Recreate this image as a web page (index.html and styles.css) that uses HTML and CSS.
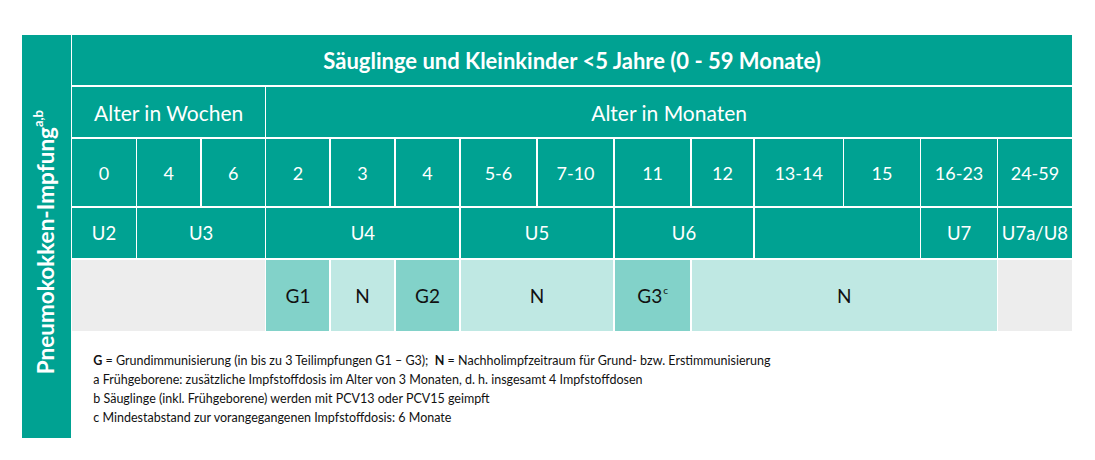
FILE: index.html
```html
<!DOCTYPE html>
<html lang="de">
<head>
<meta charset="utf-8">
<title>Pneumokokken-Impfung</title>
<link rel="stylesheet" href="styles.css">
</head>
<body>
<div class="page">
  <div class="side">
    <span class="side-label">Pneumokokken-Impfung<sup>a,b</sup></span>
  </div>
  <div class="main">
    <div class="table">
      <div class="cell title span-all">Säuglinge und Kleinkinder &lt;5 Jahre (0 - 59 Monate)</div>

      <div class="cell group c1-3">Alter in Wochen</div>
      <div class="cell group c4-14">Alter in Monaten</div>

      <div class="cell num">0</div>
      <div class="cell num">4</div>
      <div class="cell num">6</div>
      <div class="cell num">2</div>
      <div class="cell num">3</div>
      <div class="cell num">4</div>
      <div class="cell num">5-6</div>
      <div class="cell num">7-10</div>
      <div class="cell num">11</div>
      <div class="cell num">12</div>
      <div class="cell num">13-14</div>
      <div class="cell num">15</div>
      <div class="cell num">16-23</div>
      <div class="cell num">24-59</div>

      <div class="cell u">U2</div>
      <div class="cell u c2-3">U3</div>
      <div class="cell u c4-6">U4</div>
      <div class="cell u c7-8">U5</div>
      <div class="cell u c9-10">U6</div>
      <div class="cell u c11-12"></div>
      <div class="cell u">U7</div>
      <div class="cell u">U7a/U8</div>

      <div class="cell none c1-3"></div>
      <div class="cell g">G1</div>
      <div class="cell n">N</div>
      <div class="cell g">G2</div>
      <div class="cell n c7-8">N</div>
      <div class="cell g">G3<sup>c</sup></div>
      <div class="cell n c10-13">N</div>
      <div class="cell none"></div>
    </div>
    <div class="notes">
      <p><b>G</b> = Grundimmunisierung (in bis zu 3 Teilimpfungen G1 – G3);&nbsp; <b>N</b> = Nachholimpfzeitraum für Grund- bzw. Erstimmunisierung</p>
      <p>a Frühgeborene: zusätzliche Impfstoffdosis im Alter von 3 Monaten, d. h. insgesamt 4 Impfstoffdosen</p>
      <p>b Säuglinge (inkl. Frühgeborene) werden mit PCV13 oder PCV15 geimpft</p>
      <p>c Mindestabstand zur vorangegangenen Impfstoffdosis: 6 Monate</p>
    </div>
  </div>
</div>
</body>
</html>
```
FILE: styles.css
```css
* { box-sizing: border-box; }
html, body { margin: 0; padding: 0; background: #fff; }
body { font-family: Lato, "Noto Sans", sans-serif; color: #000; }

.page {
  display: flex;
  align-items: flex-start;
  gap: 1.3px;
  padding: 35px 0 0 22.3px;
}

.side {
  width: 48.7px;
  height: 403px;
  background: #00a292;
  display: flex;
  align-items: center;
  justify-content: center;
  padding-top: 12px;
}
.side-label {
  writing-mode: vertical-rl;
  transform: rotate(180deg);
  color: #fff;
  font-weight: 700;
  font-size: 22.5px;
  line-height: 1;
  white-space: nowrap;
}
.side-label sup { font-size: 13px; vertical-align: super; line-height: 0; }

.main { width: 1000px; }

.table {
  display: grid;
  grid-template-columns: 63.5px 63px 63.5px 63px 63.5px 63.5px 75.7px 75.7px 75.7px 61.4px 88px 76px 75.3px 73.7px;
  grid-template-rows: 50px 50px 67px 50px 71px;
  column-gap: 1.4px;
  row-gap: 2px;
}

.cell {
  display: flex;
  align-items: center;
  justify-content: center;
  background: #00a292;
  color: #fff;
  font-size: 19px;
  white-space: nowrap;
}

.title { font-weight: 700; font-size: 22px; }
.group { font-size: 21px; font-weight: 400; }
.num { font-size: 18px; }
.u { font-size: 18.5px; }

.g { background: #82d2c9; color: #111; }
.n { background: #bfe8e3; color: #111; }
.none { background: #ededed; }
.g sup { font-size: 10px; vertical-align: 0; position: relative; top: -6px; margin-left: 1px; }

.span-all { grid-column: 1 / -1; }
.c1-3 { grid-column: 1 / 4; }
.c2-3 { grid-column: 2 / 4; }
.c4-6 { grid-column: 4 / 7; }
.c4-14 { grid-column: 4 / 15; }
.c7-8 { grid-column: 7 / 9; }
.c9-10 { grid-column: 9 / 11; }
.c10-13 { grid-column: 10 / 14; }
.c11-12 { grid-column: 11 / 13; }

.notes {
  padding: 19.5px 0 0 21px;
  font-size: 12.5px;
  line-height: 19.3px;
  color: #111;
}
.notes p { margin: 0; }
.notes b { font-weight: 700; }
```
